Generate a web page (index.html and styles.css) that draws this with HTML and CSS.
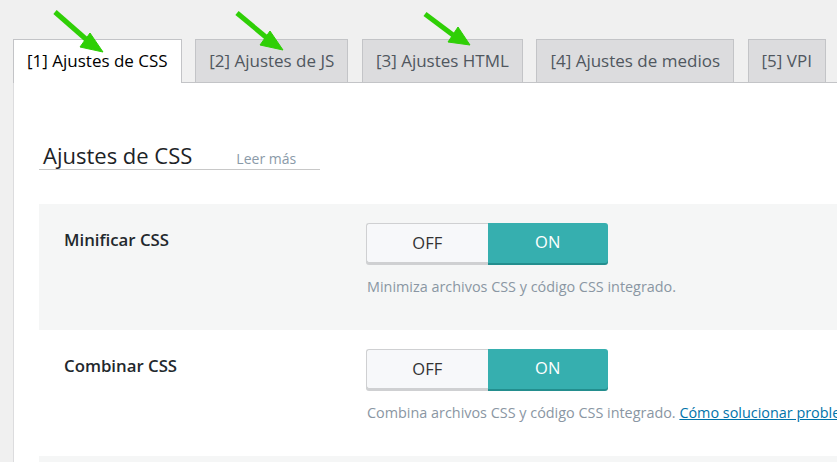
FILE: index.html
```html
<!DOCTYPE html>
<html lang="es">
<head>
  <meta charset="UTF-8">
  <title>Ajustes de CSS</title>
  <link rel="stylesheet" href="styles.css">
</head>
<body>

<div class="pagina">

  <!-- flechas verdes -->
  <svg class="flechas" viewBox="0 0 837 462">
    <g fill="#2fcf06" stroke="#2fcf06">
      <line x1="55" y1="12" x2="87" y2="40" stroke-width="5"/>
      <polygon points="103,52 90,33 80,47" stroke-width="1"/>
      <line x1="237" y1="13" x2="267" y2="38" stroke-width="5"/>
      <polygon points="283,50 270,31 260,45" stroke-width="1"/>
      <line x1="425" y1="14" x2="453" y2="35" stroke-width="5"/>
      <polygon points="470,45 458,27 448,42" stroke-width="1"/>
    </g>
  </svg>

  <nav class="pestanas">
    <a class="pestana activa">[1] Ajustes de CSS</a>
    <a class="pestana">[2] Ajustes de JS</a>
    <a class="pestana">[3] Ajustes HTML</a>
    <a class="pestana">[4] Ajustes de medios</a>
    <a class="pestana">[5] VPI</a>
  </nav>

  <div class="panel">
    <div class="titulo">
      <h2>Ajustes de CSS</h2>
      <a class="leer-mas">Leer más</a>
    </div>

    <div class="ajuste gris">
      <div class="etiqueta">Minificar CSS</div>
      <div class="control">
        <div class="interruptor">
          <span class="opcion off">OFF</span>
          <span class="opcion on">ON</span>
        </div>
        <p class="descripcion">Minimiza archivos CSS y código CSS integrado.</p>
      </div>
    </div>

    <div class="ajuste">
      <div class="etiqueta">Combinar CSS</div>
      <div class="control">
        <div class="interruptor">
          <span class="opcion off">OFF</span>
          <span class="opcion on">ON</span>
        </div>
        <p class="descripcion">Combina archivos CSS y código CSS integrado. <a class="enlace">Cómo solucionar problemas</a></p>
      </div>
    </div>

    <div class="ajuste gris fin"></div>
  </div>

</div>

</body>
</html>
```

FILE: styles.css
```css
body {
  margin: 0;
  background-color: #f0f0f0;
  font-family: "Open Sans", "Noto Sans", sans-serif;
  overflow: hidden;
}

.pagina {
  position: relative;
  height: 462px;
  box-sizing: border-box;
  padding: 39px 0 0 13px;
  overflow: hidden;
}

.flechas {
  position: absolute;
  top: 0;
  left: 0;
  width: 837px;
  height: 462px;
  pointer-events: none;
  z-index: 5;
}

.pestanas {
  display: flex;
  gap: 13.5px;
  position: relative;
  z-index: 2;
}

.pestana {
  display: block;
  height: 42px;
  line-height: 42px;
  padding: 0 13px;
  border: 1px solid #c3c4c7;
  border-bottom: none;
  background-color: #dcdcde;
  color: #50575e;
  font-size: 17px;
  white-space: nowrap;
}

.pestana.activa {
  background-color: #fff;
  color: #000;
  height: 43px;
  margin-bottom: -1px;
}

.panel {
  background-color: #fff;
  border-top: 1px solid #c3c4c7;
  border-left: 1px solid #dcdcde;
  padding: 58px 0 0 25px;
}

.titulo {
  display: flex;
  align-items: baseline;
  width: 281px;
  border-bottom: 1px solid #c8c8c8;
  padding-left: 4px;
  box-sizing: border-box;
}

.titulo h2 {
  margin: 0;
  font-size: 22px;
  line-height: 28px;
  font-weight: 500;
  color: #1d2327;
}

.leer-mas {
  margin-left: 44px;
  font-size: 14px;
  color: #8a9aa8;
}

.ajuste {
  display: flex;
  padding: 19px 0 0 25px;
  height: 107px;
  background-color: #fff;
}

.ajuste.gris {
  background-color: #f5f6f6;
}

.ajuste.fin {
  height: 20px;
}

.titulo + .ajuste {
  margin-top: 34px;
}

.etiqueta {
  width: 302px;
  flex-shrink: 0;
  padding-top: 5px;
  font-size: 16.8px;
  font-weight: 600;
  color: #23282d;
}

.control {
  min-width: 0;
}

.interruptor {
  display: flex;
  width: 242px;
  height: 40px;
}

.opcion {
  flex: 1;
  text-align: center;
  line-height: 38px;
  font-size: 16.5px;
  box-sizing: border-box;
}

.opcion.off {
  background-color: #f7f8fa;
  color: #333;
  border: 1px solid #cfd0d2;
  border-right: none;
  border-radius: 3px 0 0 3px;
  box-shadow: 0 2px 0 #cfd0d2;
}

.opcion.on {
  background-color: #36afaf;
  color: #fff;
  border-radius: 0 3px 3px 0;
  box-shadow: 0 2px 0 #238e8e;
}

.descripcion {
  margin: 14px 0 0 1px;
  font-size: 14.4px;
  color: #8a96a3;
  white-space: nowrap;
}

.enlace {
  color: #0073aa;
  text-decoration: underline;
}
```
